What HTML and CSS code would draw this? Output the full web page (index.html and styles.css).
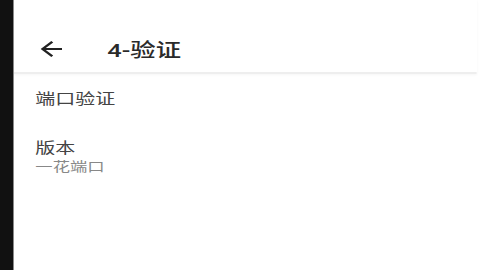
FILE: index.html
```html
<!DOCTYPE html>
<html lang="zh">
<head>
    <meta charset="UTF-8">
    <meta name="viewport" content="width=device-width, initial-scale=1.0">
    <title>4-验证</title>
    <link rel="stylesheet" href="styles.css">
</head>
<body>

    <div class="screen">
        <div class="side-bar"></div>

        <div class="page">
            <div class="page-inner">
                <div class="toolbar">
                    <div class="back-btn">
                        <svg viewBox="0 0 24 24" width="24" height="24">
                            <path d="M20 11H7.83l5.59-5.59L12 4l-8 8 8 8 1.41-1.41L7.83 13H20v-2z" fill="#222"/>
                        </svg>
                    </div>
                    <div class="toolbar-title">4-验证</div>
                </div>

                <div class="item item-single">
                    <div class="item-title">端口验证</div>
                </div>

                <div class="item">
                    <div class="item-title">版本</div>
                    <div class="item-sub">一花端口</div>
                </div>
            </div>
        </div>
    </div>

</body>
</html>
```

FILE: styles.css
```css
html, body {
    margin: 0;
    padding: 0;
    background: #fff;
}

body {
    font-family: Roboto, "Noto Sans CJK SC", sans-serif;
    width: 480px;
    height: 270px;
    overflow: hidden;
}

.screen {
    display: flex;
    height: 270px;
}

.side-bar {
    width: 13px;
    background: #111;
    border-right: 1px solid #8a8a8a;
    flex-shrink: 0;
}

.page {
    flex: 1;
    overflow: hidden;
}

/* the capture is stretched sideways, so the content is too */
.page-inner {
    width: 348px;
    transform: scaleX(1.3333);
    transform-origin: 0 0;
}

.toolbar {
    display: flex;
    align-items: center;
    height: 48px;
    padding-top: 24px;
    padding-left: 16px;
    margin-right: 1px;
    border-bottom: 2px solid #eeeeee;
    box-shadow: 0 1px 2px rgba(0, 0, 0, 0.04);
}

.back-btn {
    width: 24px;
    height: 24px;
    margin-top: 2px;
}

.back-btn svg {
    display: block;
}

.toolbar-title {
    margin-left: 30px;
    font-size: 19px;
    font-weight: 500;
    color: #2a2a2a;
}

.item {
    padding: 0 16px;
}

.item-single {
    padding-top: 15px;
    height: 49px;
}

.item-title {
    font-size: 15px;
    color: #444;
    line-height: 20px;
}

.item-sub {
    font-size: 13px;
    color: #888;
    line-height: 18px;
}
```
